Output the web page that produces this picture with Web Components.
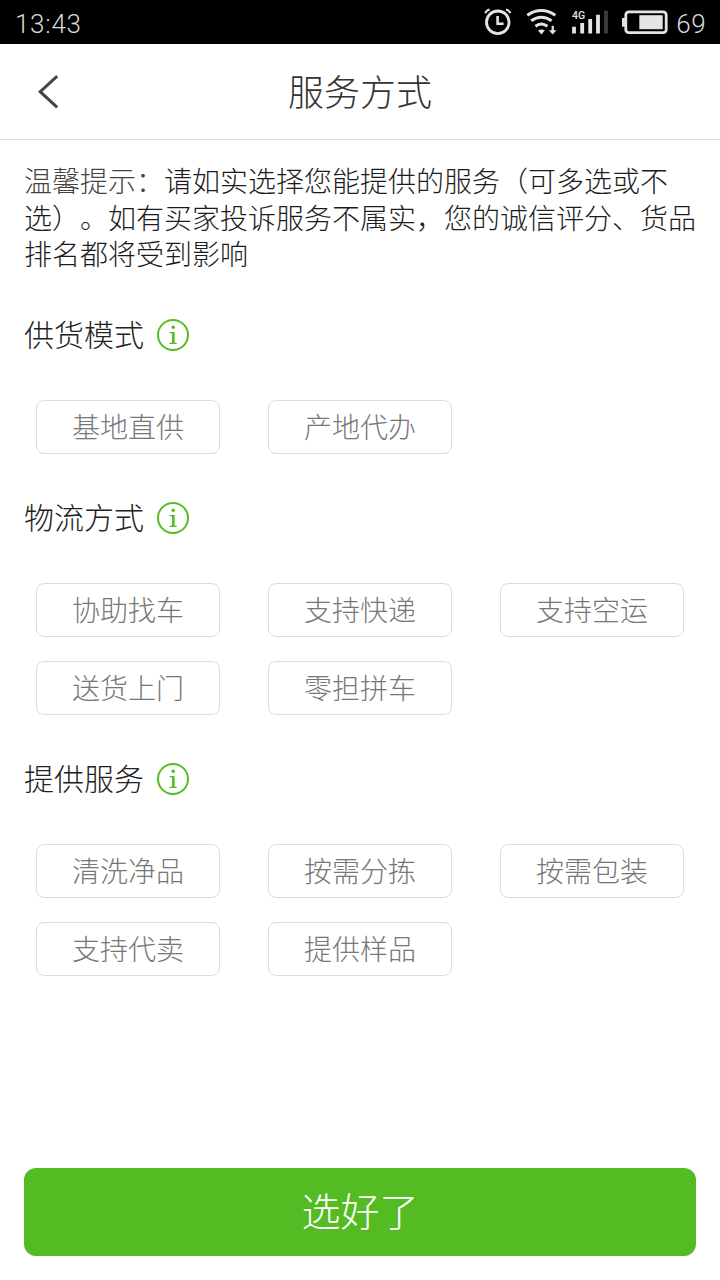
<!DOCTYPE html>
<html lang="zh-CN">
<head>
<meta charset="UTF-8">
<meta name="viewport" content="width=device-width, initial-scale=1">
<title>服务方式</title>
<style>
	body {
		margin: 0;
		background: #fff;
		font-family: "Noto Sans CJK SC", sans-serif;
		font-weight: 300;
		text-spacing-trim: space-all;
	}
</style>
</head>
<body>
<service-page>
	<status-bar slot="top" time="13:43" battery="69"></status-bar>
	<title-bar slot="top">服务方式</title-bar>
	<tip-text><span slot="label">温馨提示：</span>请如实选择您能提供的服务（可多选或不<br>选）。如有买家投诉服务不属实，您的诚信评分、货品<br>排名都将受到影响</tip-text>
	<option-group label="供货模式">
		<option-chip>基地直供</option-chip>
		<option-chip>产地代办</option-chip>
	</option-group>
	<option-group label="物流方式">
		<option-chip>协助找车</option-chip>
		<option-chip>支持快递</option-chip>
		<option-chip>支持空运</option-chip>
		<option-chip>送货上门</option-chip>
		<option-chip>零担拼车</option-chip>
	</option-group>
	<option-group label="提供服务">
		<option-chip>清洗净品</option-chip>
		<option-chip>按需分拣</option-chip>
		<option-chip>按需包装</option-chip>
		<option-chip>支持代卖</option-chip>
		<option-chip>提供样品</option-chip>
	</option-group>
	<submit-button slot="bottom">选好了</submit-button>
</service-page>

<script>
// Shared helper: open a shadow root and fill it
function render(el, html) {
	el.attachShadow({ mode: 'open' }).innerHTML = html;
}

// Page frame: fixed bars on top, content, button at the bottom
class ServicePage extends HTMLElement {
	constructor() {
		super();
		render(this, `
			<style>
				:host {
					box-sizing: border-box;
					display: flex;
					flex-direction: column;
					height: 1280px;
					overflow: hidden;
					width: 720px;
				}
				main {
					flex: 1;
					padding: 22px 24px 0;
				}
				footer {
					padding: 0 24px 24px;
				}
			</style>
			<slot name="top"></slot>
			<main><slot></slot></main>
			<footer><slot name="bottom"></slot></footer>
		`);
	}
}
customElements.define('service-page', ServicePage);

class StatusBar extends HTMLElement {
	constructor() {
		super();
		render(this, `
			<style>
				:host {
					align-items: center;
					background: #000;
					box-sizing: border-box;
					color: #d8d8d8;
					display: flex;
					font: 300 26px/44px Roboto, sans-serif;
					height: 44px;
					justify-content: space-between;
					padding: 4px 14px 0 15px;
				}
				.time {
					letter-spacing: 0.7px;
				}
				.right {
					align-items: center;
					display: flex;
				}
				svg {
					display: block;
					margin: -4px 6px 0 0;
				}
				.battery {
					letter-spacing: 0.4px;
				}
			</style>
			<span class="time">${this.getAttribute('time')}</span>
			<div class="right">
				<svg width="186" height="44" viewBox="484 0 186 44" fill="none" stroke="#e4e4e4">
					<!-- alarm clock -->
					<circle cx="497.8" cy="22.3" r="11.3" stroke-width="2.8"/>
					<path d="M497.6 16v7.8h6" stroke-width="2.6"/>
					<path d="M485.2 13.2q1.2-3 4.4-3.6M510.4 13.2q-1.2-3-4.4-3.6" stroke-width="2"/>
					<!-- wifi -->
					<path d="M527.3 15.2q14-9.4 28 0M531.2 20.8q10.2-7 20.4 0M535.4 26.2q6-4.4 12 0" stroke-width="3"/>
					<path d="M538 30.6q3.4-2.4 6.8 0L541.4 34.6z" fill="#e4e4e4" stroke="none"/>
					<path d="M552.7 25.8v6" stroke-width="2.2"/>
					<path d="M549 30.3h7.4l-3.7 4.2z" fill="#e4e4e4" stroke="none"/>
					<!-- signal -->
					<text x="572" y="18.5" fill="#e4e4e4" stroke="none" font-family="Roboto, sans-serif" font-weight="500" font-size="10.5">4G</text>
					<path d="M574 33.5v-6.7M582.2 33.5v-10.5M590.2 33.5v-14.5M598 33.5v-18.7" stroke-width="3.8"/>
					<path d="M606 33.5v-22.8" stroke="#3c3c3c" stroke-width="3.8"/>
					<!-- battery -->
					<rect x="625.8" y="11.8" width="40.4" height="20.9" rx="3" stroke-width="2.8"/>
					<path d="M622 18h3.4v8.6H622z" fill="#e4e4e4" stroke="none"/>
					<path d="M639.3 15.2h23.4v14h-23.4z" fill="#e4e4e4" stroke="none"/>
				</svg>
				<span class="battery">${this.getAttribute('battery')}</span>
			</div>
		`);
	}
}
customElements.define('status-bar', StatusBar);

class TitleBar extends HTMLElement {
	constructor() {
		super();
		render(this, `
			<style>
				:host {
					align-items: center;
					border-bottom: 1px solid #dcdcdc;
					box-sizing: border-box;
					color: #333;
					display: grid;
					font-size: 36px;
					grid-template-columns: 96px 1fr 96px;
					height: 96px;
					line-height: 92px;
					text-align: center;
				}
				svg {
					display: block;
					margin: 1px 0 0 36px;
				}
				span {
					padding-bottom: 3px;
				}
			</style>
			<svg width="24" height="36" viewBox="0 0 24 36" fill="none" stroke="#444" stroke-width="3">
				<path d="M21.2 2.2L4.2 17.7L21.2 33.4"/>
			</svg>
			<span><slot></slot></span>
		`);
	}
}
customElements.define('title-bar', TitleBar);

class TipText extends HTMLElement {
	constructor() {
		super();
		render(this, `
			<style>
				:host {
					color: #1c1c1c;
					display: block;
					font-size: 28px;
					height: 110px;
					line-height: 36.5px;
					white-space: nowrap;
				}
				.label {
					color: #444;
				}
			</style>
			<span class="label"><slot name="label"></slot></span><slot></slot>
		`);
	}
}
customElements.define('tip-text', TipText);

// Heading with an info icon and a three column grid of chips
class OptionGroup extends HTMLElement {
	constructor() {
		super();
		render(this, `
			<style>
				:host {
					display: block;
					padding-top: 46px;
				}
				:host(:first-of-type) {
					padding-top: 45px;
				}
				h2 {
					align-items: center;
					color: #222;
					display: flex;
					font-size: 30px;
					font-weight: 300;
					gap: 12px;
					height: 36px;
					line-height: 33px;
					margin: 0 0 47px;
				}
				h2 span {
					padding-bottom: 3px;
				}
				.grid {
					display: grid;
					gap: 24px 48px;
					grid-template-columns: repeat(3, 184px);
					padding: 0 12px;
				}
			</style>
			<h2>
				<span>${this.getAttribute('label')}</span>
				<svg width="34" height="34" viewBox="0 0 34 34">
					<circle cx="17" cy="17" r="15" fill="none" stroke="#55bd22" stroke-width="2"/>
					<circle cx="17.2" cy="9.2" r="1.8" fill="#55bd22"/>
					<path d="M13.6 13.9h5v10.5l2.2.5v1h-7.4v-1l2.6-.5v-8.9l-2.4-.5z" fill="#55bd22"/>
				</svg>
			</h2>
			<div class="grid"><slot></slot></div>
		`);
	}
}
customElements.define('option-group', OptionGroup);

class OptionChip extends HTMLElement {
	constructor() {
		super();
		render(this, `
			<style>
				:host {
					border: 1px solid #dcdcdc;
					border-radius: 8px;
					box-sizing: border-box;
					color: #777;
					display: block;
					font-size: 28px;
					height: 54px;
					line-height: 50px;
					text-align: center;
				}
			</style>
			<slot></slot>
		`);
	}
}
customElements.define('option-chip', OptionChip);

class SubmitButton extends HTMLElement {
	constructor() {
		super();
		render(this, `
			<style>
				:host {
					background: #55bb23;
					border-radius: 12px;
					color: #fff;
					display: block;
					font-size: 39px;
					height: 88px;
					line-height: 83px;
					text-align: center;
				}
			</style>
			<slot></slot>
		`);
	}
}
customElements.define('submit-button', SubmitButton);
</script>
</body>
</html>
